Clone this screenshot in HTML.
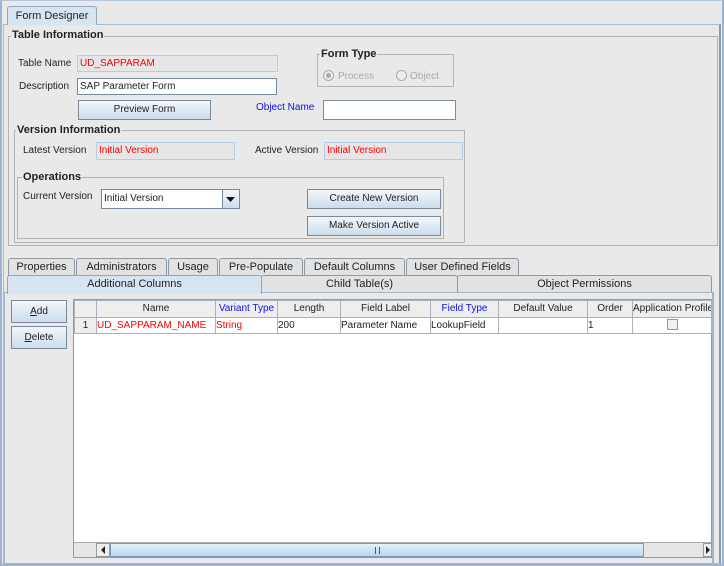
<!DOCTYPE html>
<html><head><meta charset="utf-8"><style>
*{box-sizing:border-box;margin:0;padding:0}
body{width:724px;height:566px;background:#e9e9e9;font-family:"Liberation Sans",Arial,sans-serif;font-size:10px;color:#222;position:relative;overflow:hidden}
.a{position:absolute}
.grp{position:absolute;border:1px solid #b4b4b4}
.ttl{position:absolute;background:#e9e9e9;font-weight:bold;font-size:11px;color:#222;padding:0 1px;line-height:13px}
.lbl{position:absolute;line-height:13px;white-space:nowrap}
.fld{position:absolute;border:1px solid #b8cde0;background:#e6e6e6;color:#f00;padding-left:2px;line-height:15px;white-space:nowrap;overflow:hidden}
.wf{position:absolute;border:1px solid #7a8a99;background:#fff;padding-left:2px;line-height:15px;white-space:nowrap}
.btn{position:absolute;border:1px solid #7a8a99;background:linear-gradient(#f2f7fb,#cddceb);text-align:center;white-space:nowrap}
.tab{position:absolute;border:1px solid #8c9aa6;border-bottom:none;background:#e2e2e2;text-align:center;line-height:16px;border-radius:3px 3px 0 0;white-space:nowrap;font-size:11px}
table{border-collapse:collapse;table-layout:fixed}
td{border:1px solid #a9b3bd;height:16px;line-height:14px;white-space:nowrap;overflow:hidden;font-size:10px}
.h td{background:#eeeeee;text-align:center;height:17px}
</style></head><body>
<div class="a" style="left:0;top:0;width:724px;height:566px;border:2px solid #9fb3cf;border-top:1px solid #b8c8dc"></div>
<div class="a" style="left:3px;top:24px;width:718px;height:540px;border:1px solid #a8bdd8;border-right:2px solid #8d9aa8"></div>
<div class="tab" style="left:7px;top:6px;width:90px;height:19px;background:#d7e5f2;border-color:#8fa6c0;font-size:11px;line-height:18px">Form Designer</div>

<div class="grp" style="left:8px;top:36px;width:710px;height:210px"></div>
<div class="ttl" style="left:11px;top:29px">Table Information</div>
<div class="lbl" style="left:18px;top:57px">Table Name</div>
<div class="fld" style="left:77px;top:55px;width:201px;height:17px">UD_SAPPARAM</div>
<div class="lbl" style="left:19px;top:80px">Description</div>
<div class="wf" style="left:77px;top:78px;width:200px;height:17px">SAP Parameter Form</div>
<div class="btn" style="left:78px;top:100px;width:133px;height:20px;line-height:18px">Preview Form</div>
<div class="lbl" style="left:256px;top:101px;color:#1010f0">Object Name</div>
<div class="wf" style="left:323px;top:100px;width:133px;height:20px"></div>

<div class="grp" style="left:317px;top:54px;width:137px;height:33px"></div>
<div class="ttl" style="left:320px;top:48px">Form Type</div>
<div class="a" style="left:323px;top:70px;width:11px;height:11px;border:1px solid #aaa;border-radius:50%;background:#eee"><div class="a" style="left:2px;top:2px;width:5px;height:5px;border-radius:50%;background:#aaa"></div></div>
<div class="lbl" style="left:338px;top:70px;color:#aaa">Process</div>
<div class="a" style="left:396px;top:70px;width:11px;height:11px;border:1px solid #aaa;border-radius:50%;background:#eee"></div>
<div class="lbl" style="left:410px;top:70px;color:#aaa">Object</div>

<div class="grp" style="left:14px;top:130px;width:451px;height:113px"></div>
<div class="ttl" style="left:16px;top:124px">Version Information</div>
<div class="lbl" style="left:23px;top:144px">Latest Version</div>
<div class="fld" style="left:96px;top:142px;width:139px;height:18px;line-height:16px">Initial Version</div>
<div class="lbl" style="left:255px;top:144px">Active Version</div>
<div class="fld" style="left:324px;top:142px;width:139px;height:18px;line-height:16px">Initial Version</div>

<div class="grp" style="left:17px;top:177px;width:427px;height:62px"></div>
<div class="ttl" style="left:22px;top:171px">Operations</div>
<div class="lbl" style="left:23px;top:190px">Current Version</div>
<div class="wf" style="left:101px;top:189px;width:139px;height:20px;line-height:18px">Initial Version</div>
<div class="btn" style="left:222px;top:189px;width:18px;height:20px;border-left:1px solid #7a8a99"><svg width="16" height="18"><path d="M3 7h9l-4.5 5z" fill="#111"/></svg></div>
<div class="btn" style="left:307px;top:189px;width:134px;height:20px;line-height:18px">Create New Version</div>
<div class="btn" style="left:307px;top:216px;width:134px;height:20px;line-height:18px">Make Version Active</div>

<div class="tab" style="left:8px;top:258px;width:67px;height:18px">Properties</div>
<div class="tab" style="left:76px;top:258px;width:91px;height:18px">Administrators</div>
<div class="tab" style="left:168px;top:258px;width:50px;height:18px">Usage</div>
<div class="tab" style="left:219px;top:258px;width:84px;height:18px">Pre-Populate</div>
<div class="tab" style="left:304px;top:258px;width:101px;height:18px">Default Columns</div>
<div class="tab" style="left:406px;top:258px;width:113px;height:18px">User Defined Fields</div>
<div class="tab" style="left:261px;top:275px;width:197px;height:18px">Child Table(s)</div>
<div class="tab" style="left:457px;top:275px;width:255px;height:18px">Object Permissions</div>
<div class="a" style="left:4px;top:292px;width:710px;height:272px;border:1px solid #9fb6cf;border-right:2px solid #9fb6cf"></div>
<div class="tab" style="left:7px;top:275px;width:255px;height:19px;background:#d7e5f2;border-color:#8fa6c0;border-bottom:none">Additional Columns</div>

<div class="btn" style="left:11px;top:300px;width:56px;height:23px;line-height:21px"><u>A</u>dd</div>
<div class="btn" style="left:11px;top:326px;width:56px;height:23px;line-height:21px"><u>D</u>elete</div>

<div class="a" style="left:73px;top:299px;width:639px;height:259px;border:1px solid #8f9aa6;background:#fff"></div>
<table class="a" style="left:74px;top:300px;width:637px">
<colgroup><col style="width:22px"><col style="width:119px"><col style="width:62px"><col style="width:63px"><col style="width:90px"><col style="width:68px"><col style="width:89px"><col style="width:45px"><col style="width:79px"></colgroup>
<tr class="h"><td></td><td>Name</td><td style="color:#1010f0">Variant Type</td><td>Length</td><td>Field Label</td><td style="color:#1010f0">Field Type</td><td>Default Value</td><td>Order</td><td style="text-align:left">Application Profile</td></tr>
<tr><td style="background:#eee;text-align:center">1</td><td style="color:#f00">UD_SAPPARAM_NAME</td><td style="color:#f00">String</td><td>200</td><td>Parameter Name</td><td>LookupField</td><td></td><td>1</td><td style="text-align:center"><span style="display:inline-block;width:11px;height:11px;border:1px solid #8f9aa6;background:#eef2f6;vertical-align:middle"></span></td></tr>
</table>
<div class="a" style="left:74px;top:542px;width:637px;height:15px;background:#e6e6e6;border-top:1px solid #aaa"></div>
<div class="a" style="left:96px;top:543px;width:14px;height:14px;border:1px solid #999;background:#eee"><svg width="12" height="12"><path d="M8 2v8L4 6z" fill="#222"/></svg></div>
<div class="a" style="left:110px;top:543px;width:534px;height:14px;border:1px solid #7a9ac0;background:linear-gradient(#e4f0f9,#bcd6ea)"><div class="a" style="left:264px;top:3px;width:5px;height:7px;border-left:1px solid #557;border-right:1px solid #557"></div></div>
<div class="a" style="left:703px;top:543px;width:9px;height:14px;border:1px solid #999;background:#eee"><svg width="8" height="12"><path d="M2 2v8l4-4z" fill="#222"/></svg></div>
</body></html>
